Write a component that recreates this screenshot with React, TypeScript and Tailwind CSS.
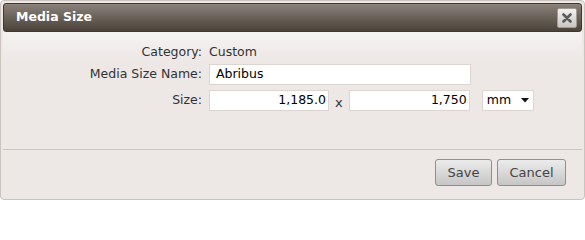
const FONT = { fontFamily: '"DejaVu Sans", Verdana, sans-serif' }

function CloseButton() {
  return (
    <button
      type="button"
      aria-label="Close"
      className="flex h-[20px] w-[20px] items-center justify-center rounded-[2px] border border-[#a29b95] bg-gradient-to-b from-[#f2f1f0] to-[#c9c6c3]"
    >
      <svg width="10" height="10" viewBox="0 0 10 10">
        <path d="M1.5 1.5 L8.5 8.5 M8.5 1.5 L1.5 8.5" stroke="#5a5a5a" strokeWidth="2.6" strokeLinecap="round" />
      </svg>
    </button>
  )
}

function Field({ value, align = 'left', className = '' }: { value: string; align?: 'left' | 'right'; className?: string }) {
  return (
    <div
      className={`flex h-[21px] items-center border border-[#dcd5d2] bg-white text-[12.5px] text-black ${
        align === 'right' ? 'justify-end pr-[2px]' : 'pl-[6px]'
      } ${className}`}
    >
      {value}
    </div>
  )
}

function Label({ children }: { children: string }) {
  return <div className="w-[206px] shrink-0 pr-[7px] text-right text-[12.5px] text-[#333]">{children}</div>
}

export default function App() {
  return (
    <div style={FONT} className="h-[200px] w-[585px] bg-white">
      <div className="flex h-[200px] w-[585px] flex-col rounded-[4px] border border-[#cbc3bd] bg-[#ede7e6] p-[2px]">
        <div className="flex h-[29px] shrink-0 items-center justify-between rounded-[3px] border border-[#40382f] bg-gradient-to-b from-[#8a827b] to-[#4b4239] pl-[12px] pr-[4px]">
          <span className="text-[12.5px] font-bold text-white">Media Size</span>
          <CloseButton />
        </div>

        <div className="flex flex-1 flex-col bg-gradient-to-b from-[#f5f3f2] to-[#ede7e6] to-[30px]">
          <div className="mt-[10px] flex h-[21px] items-center">
            <Label>Category:</Label>
            <span className="text-[12.5px] text-[#333]">Custom</span>
          </div>

          <div className="mt-[1px] flex h-[21px] items-center">
            <Label>Media Size Name:</Label>
            <Field value="Abribus" className="w-[262px]" />
          </div>

          <div className="mt-[5px] flex h-[21px] items-center">
            <Label>Size:</Label>
            <Field value="1,185.0" align="right" className="w-[120px]" />
            <span className="mx-[6px] mt-[4px] text-[13px] text-[#333]">x</span>
            <Field value="1,750" align="right" className="w-[121px]" />
            <div className="ml-[12px] flex h-[21px] w-[52px] items-center justify-between border border-[#dcd5d2] bg-white pl-[4px] pr-[4px] text-[12.5px] text-black">
              <span>mm</span>
              <svg width="8" height="5" viewBox="0 0 8 5">
                <path d="M0 0 H8 L4 4.5 Z" fill="#111" />
              </svg>
            </div>
          </div>

          <div className="mt-[38px] h-px shrink-0 bg-[#cdc4bd]" />

          <div className="mt-[9px] flex justify-end gap-[5px] pr-[16px]">
            <button
              type="button"
              className="h-[27px] w-[57px] rounded-[3px] border border-[#8f8f8f] bg-gradient-to-b from-[#ececec] to-[#c6c6c6] text-[13px] text-[#444]"
            >
              Save
            </button>
            <button
              type="button"
              className="h-[27px] w-[69px] rounded-[3px] border border-[#8f8f8f] bg-gradient-to-b from-[#ececec] to-[#c6c6c6] text-[13px] text-[#444]"
            >
              Cancel
            </button>
          </div>
        </div>
      </div>
    </div>
  )
}
